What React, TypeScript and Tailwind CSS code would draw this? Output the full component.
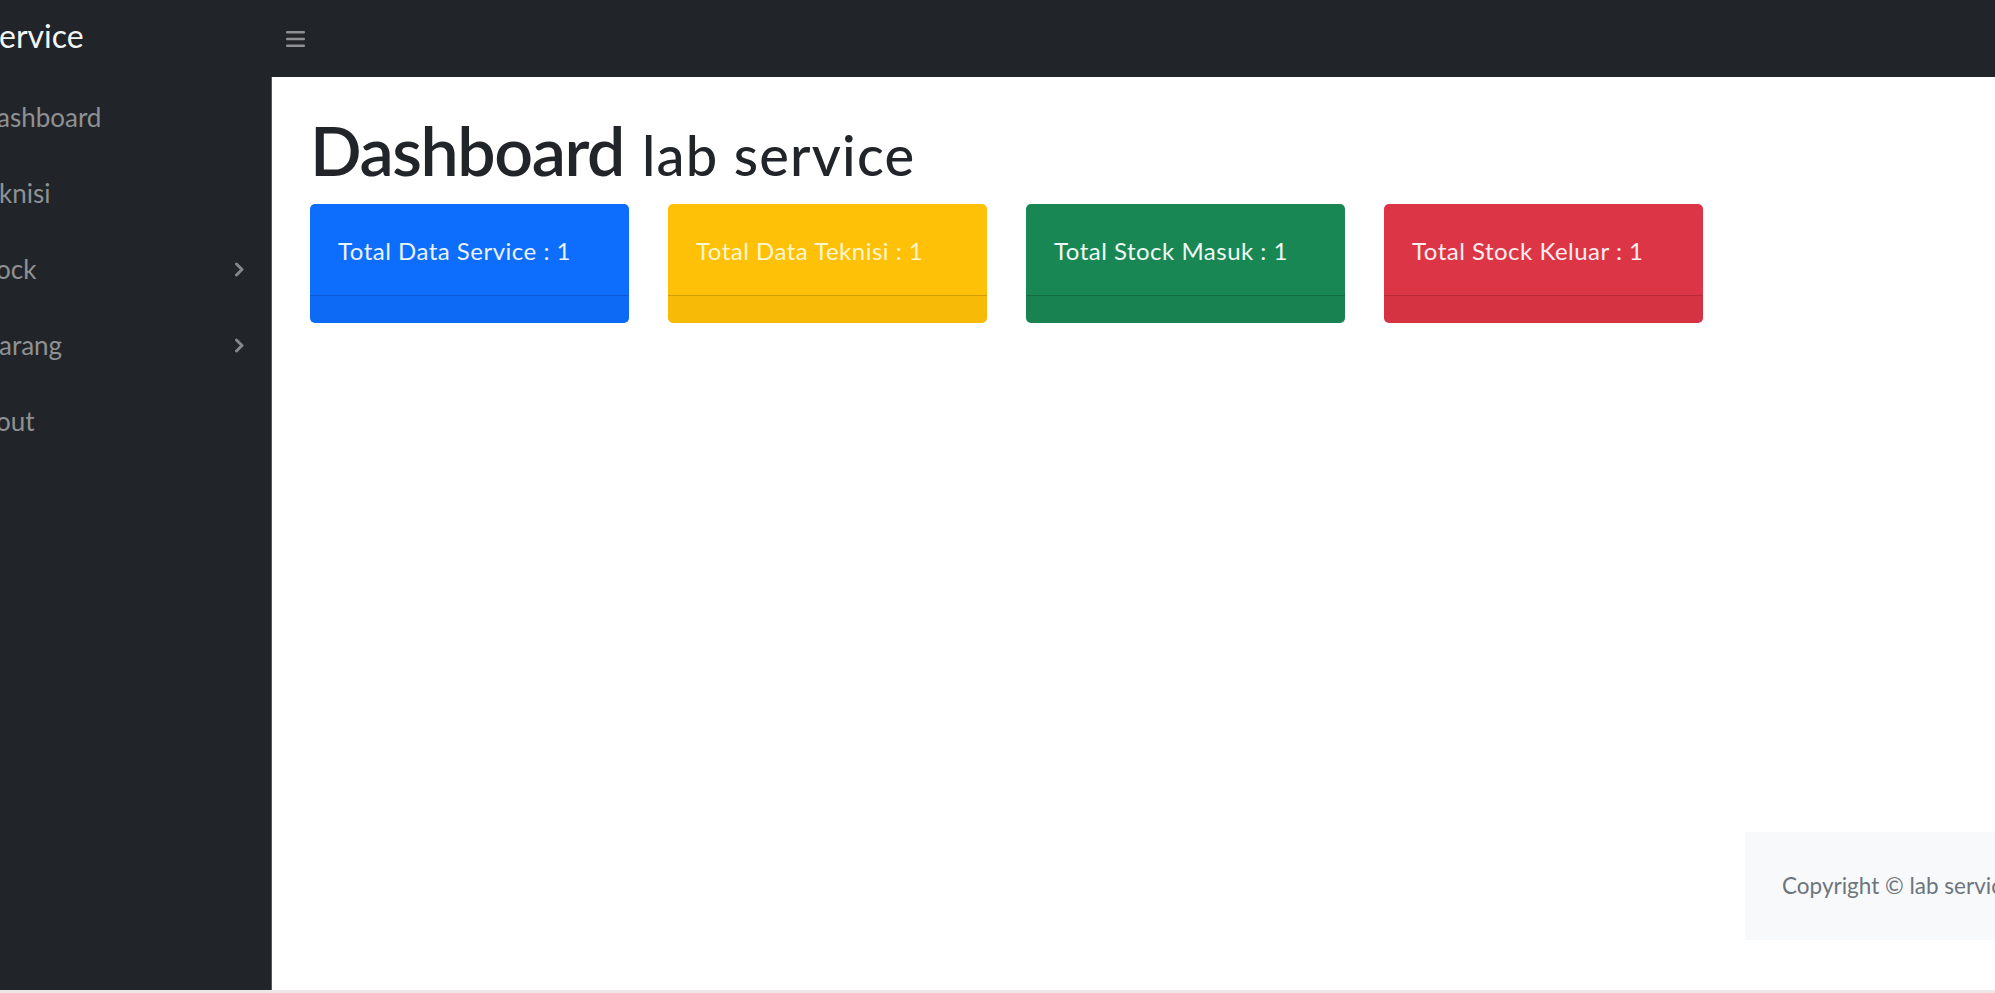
import React from "react";

const font = { fontFamily: "Lato, 'Noto Sans', sans-serif" };

function Chevron() {
  return (
    <svg width="11" height="15" viewBox="0 0 11 15" fill="none">
      <path d="M2.5 2 L8 7.5 L2.5 13" stroke="#85878a" strokeWidth="3" strokeLinecap="round" strokeLinejoin="round" />
    </svg>
  );
}

function Bars() {
  return (
    <svg width="19" height="18" viewBox="0 0 19 18">
      <rect x="0" y="1" width="19" height="2.6" rx="1" fill="#8d8f92" />
      <rect x="0" y="7.7" width="19" height="2.6" rx="1" fill="#8d8f92" />
      <rect x="0" y="14.4" width="19" height="2.6" rx="1" fill="#8d8f92" />
    </svg>
  );
}

const navItems = [
  { label: "ashboard", ml: "ml-[-3px]", chevron: false },
  { label: "knisi", ml: "ml-[-1px]", chevron: false },
  { label: "ock", ml: "ml-[-4px]", chevron: true },
  { label: "arang", ml: "ml-[-1px]", chevron: true },
  { label: "out", ml: "ml-[-4px]", chevron: false },
];

const cards = [
  { label: "Total Data Service : 1", bg: "bg-[#0d6efd]", text: "text-[#eaf2ff]" },
  { label: "Total Data Teknisi : 1", bg: "bg-[#ffc107]", text: "text-[#fff6cf]" },
  { label: "Total Stock Masuk : 1", bg: "bg-[#198754]", text: "text-[#eefaf3]" },
  { label: "Total Stock Keluar : 1", bg: "bg-[#dc3545]", text: "text-[#ffeef0]" },
];

export default function App() {
  return (
    <div style={font} className="w-[1995px] h-[993px] overflow-hidden bg-white flex flex-col">
      <header className="h-[77px] shrink-0 bg-[#212529] flex items-center">
        <div className="w-[272px] shrink-0 flex items-center">
          <span className="text-[32px] leading-none text-[#f4f5f6] ml-[-1px] pb-[6px]">ervice</span>
        </div>
        <div className="ml-[14px] flex items-center">
          <Bars />
        </div>
      </header>

      <div className="flex flex-1 min-h-0">
        <aside className="w-[272px] shrink-0 bg-[#212529] border-r border-[#55585c] pt-[2px] overflow-hidden">
          {navItems.map((it) => (
            <div key={it.label} className="h-[76px] flex items-center justify-between pr-[26px]">
              <span className={`text-[26px] leading-none text-[#8f9194] ${it.ml}`}>{it.label}</span>
              {it.chevron ? <Chevron /> : null}
            </div>
          ))}
        </aside>

        <main className="flex-1 flex flex-col min-w-0">
          <div className="pl-[38px] pt-[39px]">
            <h1 className="text-[#212529] leading-none flex items-baseline whitespace-nowrap">
              <span className="text-[68px] font-semibold tracking-[-1.4px]">Dashboard</span>
              <span className="text-[56px] font-medium ml-[18px] tracking-[1.2px]">lab service</span>
            </h1>
            <div className="flex gap-[39px] mt-[20px]">
              {cards.map((c) => (
                <div key={c.label} className={`w-[319px] h-[119px] rounded-[5px] ${c.bg} flex flex-col overflow-hidden`}>
                  <div className="h-[91px] flex items-center px-[28px]">
                    <span className={`text-[24px] leading-none tracking-[0.5px] ${c.text} pt-[3px]`}>{c.label}</span>
                  </div>
                  <div className="flex-1 border-t border-black/15 bg-black/[0.03]" />
                </div>
              ))}
            </div>
          </div>

          <div className="mt-auto mb-[50px] flex justify-end">
            <div className="w-[250px] h-[108px] bg-[#f8f9fa] flex items-center pl-[37px] overflow-hidden whitespace-nowrap">
              <span className="text-[22.5px] text-[#6c757d]">Copyright © lab service 2023</span>
            </div>
          </div>
        </main>
      </div>
      <div className="h-[3px] shrink-0 bg-[#ebe8e7]" />
    </div>
  );
}
